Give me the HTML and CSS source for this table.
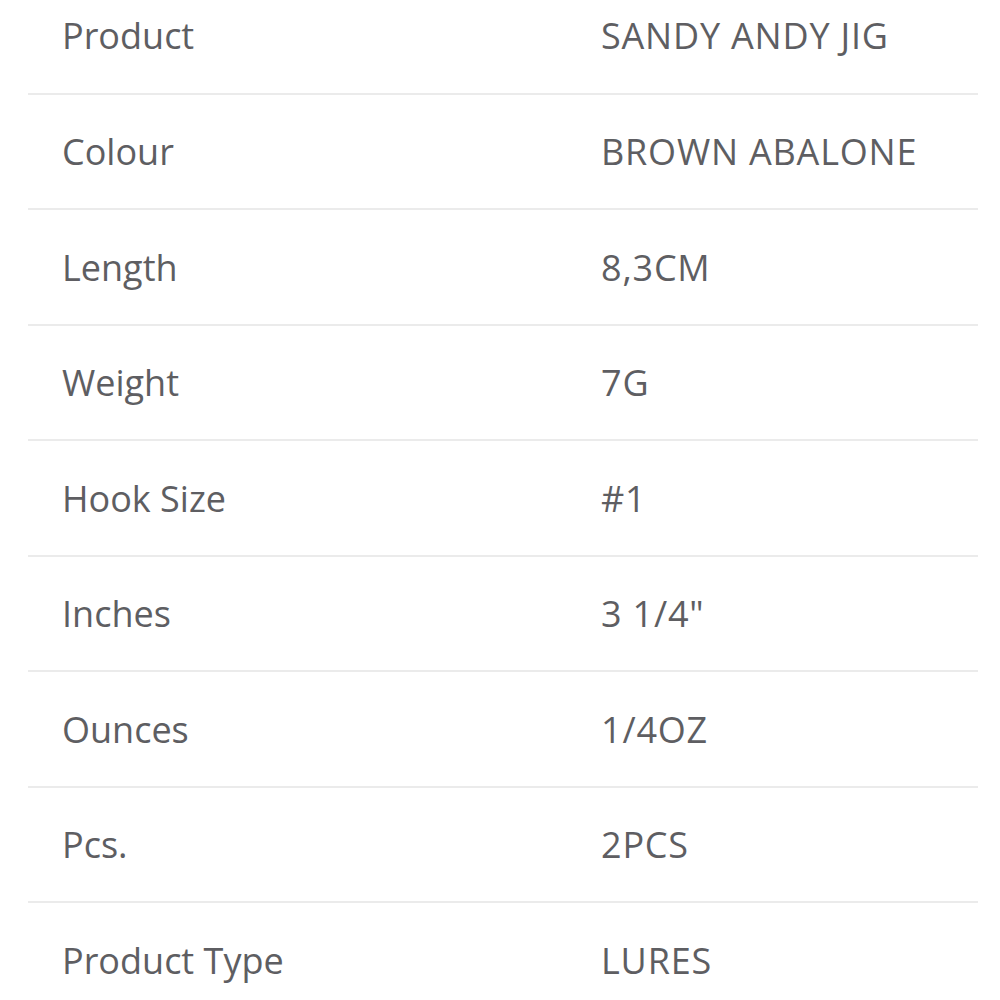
FILE: index.html
```html
<!DOCTYPE html>
<html>
<head>
<meta charset="utf-8">
<link rel="stylesheet" href="styles.css">
</head>
<body>
<div class="wrap">
<table class="specs">
<tbody>
<tr><td class="label">Product</td><td class="value">SANDY ANDY JIG</td></tr>
<tr><td class="label">Colour</td><td class="value">BROWN ABALONE</td></tr>
<tr><td class="label">Length</td><td class="value">8,3CM</td></tr>
<tr><td class="label">Weight</td><td class="value">7G</td></tr>
<tr><td class="label">Hook Size</td><td class="value">#1</td></tr>
<tr><td class="label">Inches</td><td class="value">3 1/4"</td></tr>
<tr><td class="label">Ounces</td><td class="value">1/4OZ</td></tr>
<tr><td class="label">Pcs.</td><td class="value">2PCS</td></tr>
<tr><td class="label">Product Type</td><td class="value">LURES</td></tr>
</tbody>
</table>
</div>
</body>
</html>
```
FILE: styles.css
```css
html, body {
  margin: 0;
  padding: 0;
  background: #fff;
  overflow: hidden;
}
.wrap {
  padding: 0 22px 0 28px;
  margin-top: -21.7px;
}
.specs {
  width: 950px;
  border-collapse: collapse;
  font-family: "Open Sans", "Noto Sans", sans-serif;
  font-size: 36px;
  color: #5e5e62;
}
.specs tr {
  height: 115.5px;
  border-bottom: 2px solid #ebebeb;
}
.specs tr:last-child {
  border-bottom: none;
}
.specs td {
  padding: 0;
  vertical-align: middle;
}
.label {
  width: 573px;
  padding-left: 34px !important;
  box-sizing: border-box;
}
.value {
  letter-spacing: 0.8px;
}
```
